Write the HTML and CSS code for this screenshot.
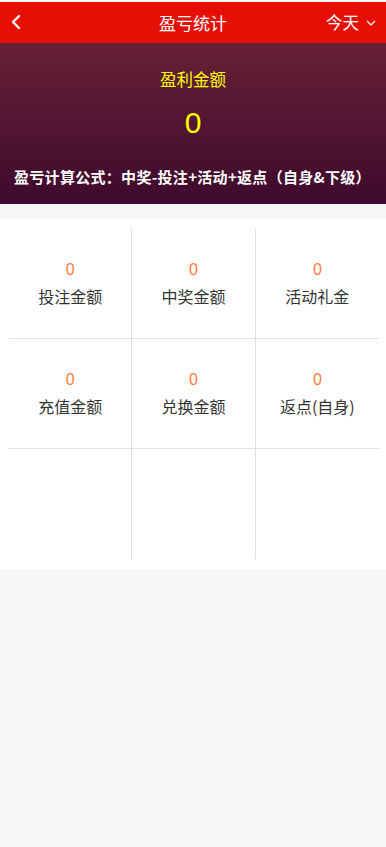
FILE: index.html
```html
<!DOCTYPE html>
<html lang="zh-CN">
<head>
<meta charset="utf-8">
<title>盈亏统计</title>
<link rel="stylesheet" href="styles.css">
</head>
<body>
<header class="topbar">
  <span class="back">
    <svg width="12" height="16" viewBox="0 0 12 16"><polyline points="9,2 3,8 9,14" fill="none" stroke="#fff" stroke-width="2.4" stroke-linecap="round" stroke-linejoin="round"/></svg>
  </span>
  <h1 class="title">盈亏统计</h1>
  <span class="range">今天
    <svg class="caret" width="10" height="6" viewBox="0 0 10 6"><polyline points="1,1 5,5 9,1" fill="none" stroke="#fff" stroke-width="1.2"/></svg>
  </span>
</header>
<section class="hero">
  <div class="hero-label">盈利金额</div>
  <div class="hero-value">0</div>
  <div class="formula">盈亏计算公式：中奖-投注+活动+返点（自身&amp;下级）</div>
</section>
<section class="panel">
  <div class="grid">
    <div class="cell"><div class="num">0</div><div class="label">投注金额</div></div>
    <div class="cell"><div class="num">0</div><div class="label">中奖金额</div></div>
    <div class="cell"><div class="num">0</div><div class="label">活动礼金</div></div>
    <div class="cell"><div class="num">0</div><div class="label">充值金额</div></div>
    <div class="cell"><div class="num">0</div><div class="label">兑换金额</div></div>
    <div class="cell"><div class="num">0</div><div class="label">返点(自身)</div></div>
    <div class="cell"></div>
    <div class="cell"></div>
    <div class="cell"></div>
  </div>
</section>
</body>
</html>
```

FILE: styles.css
```css
* { box-sizing: border-box; }
html, body {
  margin: 0;
  background: #f7f7f7;
}
body {
  padding-top: 2px;
  min-height: 847px;
  font-family: "Noto Sans CJK SC", "Noto Sans", sans-serif;
  color: #333;
}
.topbar {
  height: 41px;
  background: #e50f05;
  display: flex;
  align-items: center;
  position: relative;
  padding: 0 10px 0 10px;
}
.back {
  display: flex;
  align-items: center;
  width: 20px;
  margin-top: -1px;
}
.title {
  position: absolute;
  left: 0;
  right: 0;
  top: 0;
  margin: 0;
  text-align: center;
  line-height: 41px;
  font-size: 17px;
  font-weight: normal;
  color: #fff;
  pointer-events: none;
}
.range {
  margin-left: auto;
  color: #fff;
  font-size: 16.5px;
  line-height: 41px;
  display: flex;
  align-items: center;
  gap: 7px;
}
.caret { margin-top: 1px; }
.hero {
  height: 161px;
  background: linear-gradient(180deg, #672136 0%, #3e0a2d 100%);
  padding-top: 24px;
  text-align: center;
}
.hero-label {
  font-size: 16.5px;
  line-height: 25px;
  color: #ffff00;
}
.hero-value {
  margin-top: 11px;
  font-size: 30px;
  line-height: 40px;
  color: #ffff00;
  font-family: "Liberation Sans", "Noto Sans CJK SC", sans-serif;
}
.formula {
  margin-top: 23px;
  padding-left: 14px;
  text-align: left;
  font-size: 15px;
  line-height: 22px;
  font-weight: bold;
  letter-spacing: 0.3px;
  color: #fff;
  white-space: nowrap;
}
.panel {
  margin-top: 15px;
  background: #fff;
  padding: 10px 7px 10px 9px;
}
.grid {
  display: grid;
  grid-template-columns: repeat(3, 1fr);
}
.cell {
  height: 110px;
  border-right: 1px solid #e0e0e0;
  border-bottom: 1px solid #e0e0e0;
  padding-top: 30px;
  text-align: center;
}
.cell:nth-child(3n) { border-right: none; }
.cell:nth-last-child(-n+3) { border-bottom: none; }
.num {
  font-size: 16px;
  line-height: 22px;
  color: #ff7a3d;
  font-family: "Liberation Sans", sans-serif;
}
.label {
  margin-top: 3px;
  font-size: 16px;
  line-height: 24px;
  color: #333;
}
```
